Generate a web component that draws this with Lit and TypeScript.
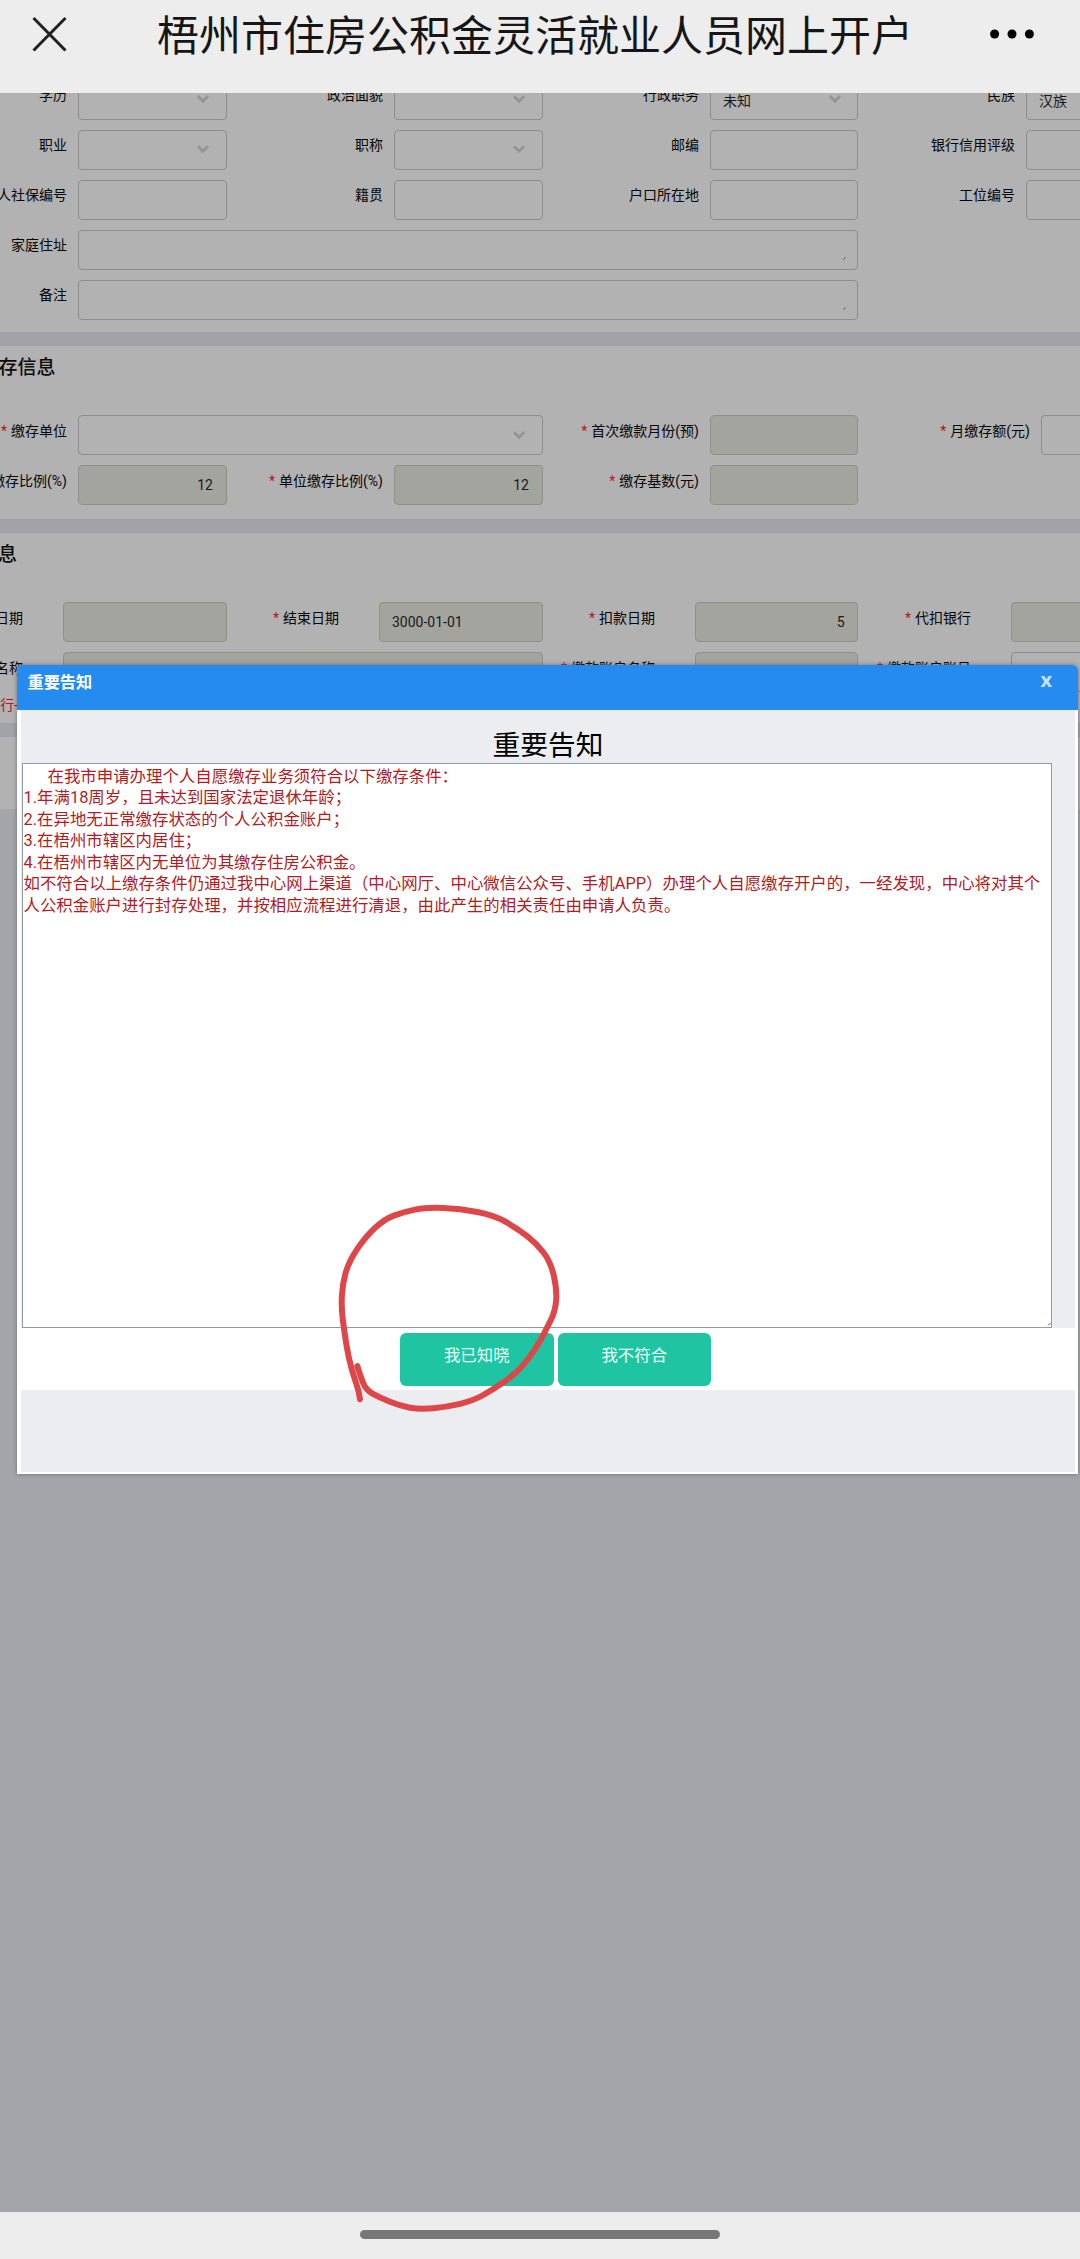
import { LitElement, html, css, nothing } from "lit";
import { customElement, property } from "lit/decorators.js";
import { classMap } from "lit/directives/class-map.js";

type Cell = {
  label?: string;
  required?: boolean;
  kind?: "input" | "select" | "area" | "none";
  value?: string;
  disabled?: boolean;
  align?: "end";
  span?: number;
};

const basicRows: Cell[][] = [
  [
    { label: "学历", kind: "select" },
    { label: "政治面貌", kind: "select" },
    { label: "行政职务", kind: "select", value: "未知" },
    { label: "民族", kind: "select", value: "汉族" },
  ],
  [
    { label: "职业", kind: "select" },
    { label: "职称", kind: "select" },
    { label: "邮编" },
    { label: "银行信用评级" },
  ],
  [
    { label: "人社保编号" },
    { label: "籍贯" },
    { label: "户口所在地" },
    { label: "工位编号" },
  ],
  [{ label: "家庭住址", kind: "area", span: 5 }],
  [{ label: "备注", kind: "area", span: 5 }],
];

const depositRows: Cell[][] = [
  [
    { label: "缴存单位", required: true, kind: "select", span: 3 },
    { label: "首次缴款月份(预)", required: true, disabled: true },
    { label: "月缴存额(元)", required: true },
  ],
  [
    { label: "缴存比例(%)", disabled: true, value: "12", align: "end" },
    { label: "单位缴存比例(%)", required: true, disabled: true, value: "12", align: "end" },
    { label: "缴存基数(元)", required: true, disabled: true },
  ],
];

const debitRows: Cell[][] = [
  [
    { label: "日期", disabled: true },
    { label: "结束日期", required: true, disabled: true, value: "3000-01-01" },
    { label: "扣款日期", required: true, disabled: true, value: "5", align: "end" },
    { label: "代扣银行", required: true, disabled: true },
  ],
  [
    { label: "名称", disabled: true, span: 3 },
    { label: "缴款账户名称", required: true, disabled: true },
    { label: "缴款账户账号", required: true },
  ],
];

const noticeLines = [
  "在我市申请办理个人自愿缴存业务须符合以下缴存条件：",
  "1.年满18周岁，且未达到国家法定退休年龄；",
  "2.在异地无正常缴存状态的个人公积金账户；",
  "3.在梧州市辖区内居住；",
  "4.在梧州市辖区内无单位为其缴存住房公积金。",
  "如不符合以上缴存条件仍通过我中心网上渠道（中心网厅、中心微信公众号、手机APP）办理个人自愿缴存开户的，一经发现，中心将对其个",
  "人公积金账户进行封存处理，并按相应流程进行清退，由此产生的相关责任由申请人负责。",
];

@customElement("form-grid")
class FormGrid extends LitElement {
  @property({ attribute: false }) rows: Cell[][] = [];
  @property() layout = "basic";

  static styles = css`
    :host {
      display: flex;
      flex-direction: column;
      gap: 10px;
    }
    .row {
      display: grid;
      height: 40px;
    }
    .basic {
      --gap: 11px;
      grid-template-columns: 78px 148.5px 167.5px 148.5px 167.5px 148px 168px 149px;
    }
    .deposit {
      --gap: 11px;
      grid-template-columns: 78px 148.5px 167.5px 148.5px 167.5px 148px 183px 149px;
    }
    .debit {
      --gap: 40px;
      grid-template-columns: 63px 163.5px 152.5px 163.5px 152.5px 163px 153px 164px;
    }
    .label {
      display: flex;
      justify-content: flex-end;
      align-items: center;
      padding: 0 var(--gap) 9px 0;
      white-space: nowrap;
      color: #050505;
      font-size: 14px;
      line-height: 1;
    }
    .star {
      color: #b5121d;
      margin-right: 4px;
    }
    .field {
      box-sizing: border-box;
      display: flex;
      align-items: center;
      border: 1.5px solid #8d8d8d;
      border-radius: 4px;
      padding: 0 12.5px 0 12px;
      font-size: 14px;
      color: #1a1a1a;
    }
    .disabled {
      background: #a3a49e;
      border-color: #8f8f8d;
    }
    .end {
      justify-content: flex-end;
    }
    .s3 {
      grid-column: span 3;
    }
    .s5 {
      grid-column: span 5;
    }
    .chev {
      margin-left: auto;
      margin-right: 3px;
      width: 14px;
      height: 10px;
      margin-top: -1px;
    }
    .grip {
      margin-left: auto;
      margin-top: 17px;
      margin-right: -1px;
      width: 3px;
      height: 3px;
    }
  `;

  render() {
    return this.rows.map(
      (row) => html`<div class="row ${this.layout}">
        ${row.map(
          (c) => html`<div class="label">
              ${c.required ? html`<span class="star">*</span>` : nothing}${c.label}
            </div>
            <div
              class=${classMap({
                field: true,
                disabled: !!c.disabled,
                end: c.align === "end",
                s3: c.span === 3,
                s5: c.span === 5,
              })}
            >
              ${c.value ?? nothing}
              ${c.kind === "select"
                ? html`<svg class="chev" viewBox="0 0 14 10">
                    <path d="M2 2.2 L7 7.2 L12 2.2" fill="none" stroke="#949494" stroke-width="2.8" />
                  </svg>`
                : nothing}
              ${c.kind === "area"
                ? html`<svg class="grip" viewBox="0 0 3 3">
                    <path d="M0.5 2.5 L2.5 0.5" stroke="#444" stroke-width="1" />
                  </svg>`
                : nothing}
            </div>`
        )}
      </div>`
    );
  }
}

const strokePoints: [number, number][] = [
  [120, 658], [116, 630], [102, 592], [85, 530], [73, 455], [64, 385], [67, 315], [86, 245],
  [138, 168], [193, 118], [250, 96], [320, 82], [420, 86], [524, 106], [594, 147],
  [649, 190], [692, 245], [711, 330], [706, 392], [682, 442], [647, 508], [592, 578],
  [520, 628], [460, 662], [380, 681], [300, 688], [240, 678], [180, 653], [138, 630],
  [122, 590], [112, 558],
];

function smoothPath(pts: [number, number][]): string {
  let d = `M${pts[0][0]} ${pts[0][1]}`;
  for (let i = 1; i < pts.length - 1; i++) {
    const [x, y] = pts[i];
    const [nx, ny] = pts[i + 1];
    d += ` Q${x} ${y} ${(x + nx) / 2} ${(y + ny) / 2}`;
  }
  const last = pts[pts.length - 1];
  return `${d} L${last[0]} ${last[1]}`;
}

@customElement("notice-dialog")
class NoticeDialog extends LitElement {
  static styles = css`
    :host {
      box-sizing: border-box;
      display: flex;
      flex-direction: column;
      border-radius: 5px 5px 0 0;
      background: #fff;
      box-shadow: 0 0 4px rgba(70, 70, 70, 0.6);
    }
    .head {
      display: flex;
      justify-content: space-between;
      align-items: center;
      box-sizing: border-box;
      height: 44.5px;
      padding: 0 26px 8px 10.5px;
      border-radius: 5px 5px 0 0;
      background: #268bef;
      color: #fff;
      font-size: 16.2px;
      font-weight: 700;
      line-height: 1;
    }
    .close {
      color: #c4e4ff;
      font-family: "Noto Sans", sans-serif;
      font-size: 20px;
      margin-top: -6px;
    }
    .body {
      flex: 1;
      margin: 0 3px 2px 4px;
      background: #ebedf0;
      display: flex;
      flex-direction: column;
    }
    .heading {
      height: 53.5px;
      display: flex;
      justify-content: center;
      align-items: flex-end;
      box-sizing: border-box;
      padding-bottom: 3px;
      font-size: 27.7px;
      line-height: 1;
      color: #000;
    }
    .text {
      box-sizing: border-box;
      height: 565px;
      width: 1030px;
      padding: 1.5px 0 1px 1px;
      margin-left: 0.5px;
      border: 1px solid #8f9aae;
      background: #fff;
      color: #b01c26;
      font-size: 16.43px;
      line-height: 21.5px;
      white-space: nowrap;
      display: flex;
      flex-direction: column;
    }
    .line:first-child {
      padding-left: 24px;
    }
    .grip {
      margin: auto 0 0 auto;
      width: 4px;
      height: 4px;
    }
    .actions {
      display: flex;
      justify-content: center;
      gap: 4px;
      box-sizing: border-box;
      height: 62px;
      padding: 5px 0 0 15px;
      background: #fff;
    }
    .btn {
      display: flex;
      justify-content: center;
      align-items: center;
      box-sizing: border-box;
      width: 153.5px;
      height: 53px;
      padding-bottom: 6px;
      border-radius: 6px;
      background: #1fc5a3;
      color: #e9fff8;
      font-size: 16.4px;
      line-height: 1;
    }
  `;

  render() {
    return html`
      <div class="head"><span>重要告知</span><span class="close">x</span></div>
      <div class="body">
        <div class="heading">重要告知</div>
        <div class="text">
          ${noticeLines.map((l) => html`<div class="line">${l}</div>`)}
          <svg class="grip" viewBox="0 0 4 4"><path d="M1 3.5 L3.5 1" stroke="#555" /></svg>
        </div>
        <div class="actions">
          <div class="btn">我已知晓</div>
          <div class="btn">我不符合</div>
        </div>
      </div>
    `;
  }
}

@customElement("app-root")
class AppRoot extends LitElement {
  static styles = css`
    :host {
      display: flex;
      flex-direction: column;
      width: 1080px;
      height: 2259px;
      overflow: hidden;
      font-family: Roboto, "Noto Sans CJK SC", sans-serif;
      background: #a4a5a9;
    }
    .bar {
      position: relative;
      z-index: 3;
      display: flex;
      flex: none;
      box-sizing: border-box;
      height: 93px;
      padding: 0 45px 0 32px;
      background: #ededed;
      color: #161616;
    }
    .x {
      width: 36px;
      height: 36px;
      margin-top: 16px;
    }
    .title {
      margin-left: 89px;
      font-size: 42px;
      line-height: 74px;
      white-space: nowrap;
    }
    .dots {
      width: 46px;
      height: 10px;
      margin-left: auto;
      margin-top: 29px;
    }
    .view {
      position: relative;
      flex: 1;
      min-height: 0;
      overflow: hidden;
    }
    .page {
      display: flex;
      flex-direction: column;
      gap: 14px;
      background: #a2a3a8;
    }
    .panel {
      box-sizing: border-box;
      background: #b2b2b2;
      overflow: hidden;
    }
    .basic {
      height: 239px;
    }
    .basic-grid {
      margin-top: -13.5px;
    }
    .deposit {
      height: 173px;
    }
    .debit {
      height: 189.5px;
    }
    .blank {
      height: 72px;
    }
    .panel-title {
      display: flex;
      justify-content: flex-end;
      align-items: center;
      height: 38px;
      margin-bottom: 31px;
      color: #0b0b0b;
      font-size: 19px;
      font-weight: 500;
      white-space: nowrap;
    }
    .w-a {
      width: 55.5px;
    }
    .w-b {
      width: 17px;
    }
    .hint {
      display: flex;
      justify-content: flex-end;
      width: 18px;
      margin-top: 5px;
      font-size: 14px;
      line-height: 16px;
      white-space: nowrap;
      color: #b5121d;
    }
    .dialog {
      position: absolute;
      left: 17px;
      top: 572px;
      width: 1061px;
      height: 808.5px;
    }
    .mark {
      position: absolute;
      left: 320px;
      top: 1087px;
      width: 420px;
      height: 320px;
    }
    .home {
      display: flex;
      flex: none;
      justify-content: center;
      box-sizing: border-box;
      height: 47px;
      padding-top: 18px;
      background: #ededed;
    }
    .handle {
      width: 360px;
      height: 9px;
      border-radius: 5px;
      background: #777;
    }
  `;

  render() {
    return html`
      <header class="bar">
        <svg class="x" viewBox="0 0 36 36">
          <path d="M1.5 2 L33.5 34.5 M33.5 2 L1.5 34.5" stroke="#222" stroke-width="3" />
        </svg>
        <div class="title">梧州市住房公积金灵活就业人员网上开户</div>
        <svg class="dots" viewBox="0 0 46 10">
          <circle cx="5.6" cy="5" r="4.5" />
          <circle cx="23" cy="5" r="4.5" />
          <circle cx="40.4" cy="5" r="4.5" />
        </svg>
      </header>
      <main class="view">
        <div class="page">
          <section class="panel basic">
            <form-grid class="basic-grid" .rows=${basicRows} layout="basic"></form-grid>
          </section>
          <section class="panel deposit">
            <div class="panel-title w-a">存信息</div>
            <form-grid .rows=${depositRows} layout="deposit"></form-grid>
          </section>
          <section class="panel debit">
            <div class="panel-title w-b">息</div>
            <form-grid .rows=${debitRows} layout="debit"></form-grid>
            <div class="hint">行-</div>
          </section>
          <section class="panel blank"></section>
        </div>
        <notice-dialog class="dialog"></notice-dialog>
        <svg class="mark" viewBox="0 0 1260 960">
          <path
            d=${smoothPath(strokePoints)}
            fill="none"
            stroke="#de4749"
            stroke-width="18"
            stroke-linecap="round"
            stroke-linejoin="round"
          />
        </svg>
      </main>
      <footer class="home"><div class="handle"></div></footer>
    `;
  }
}
